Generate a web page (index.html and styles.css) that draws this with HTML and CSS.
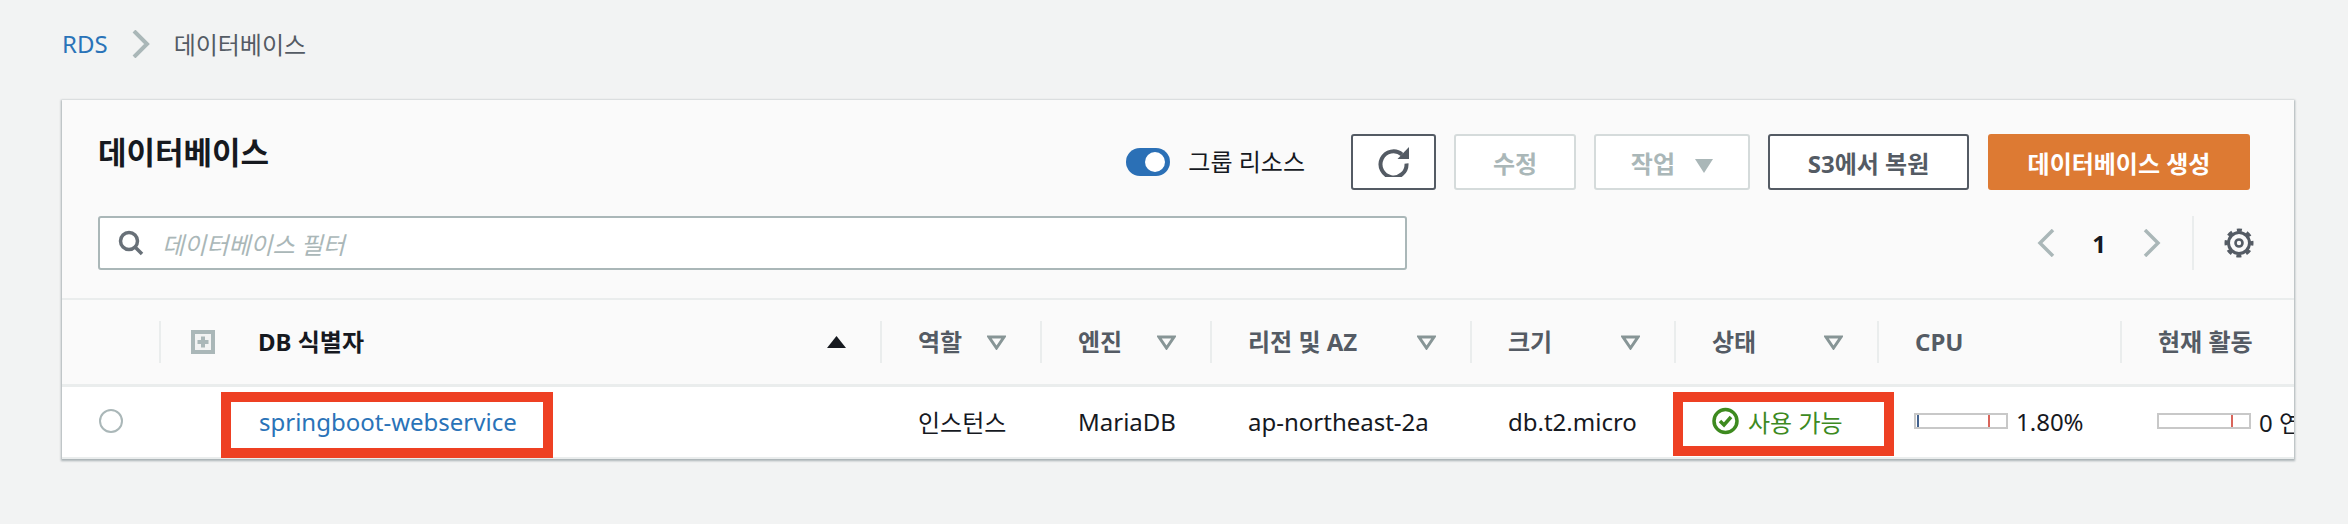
FILE: index.html
```html
<!DOCTYPE html>
<html lang="ko">
<head>
    <meta charset="UTF-8">
    <title>데이터베이스 - RDS</title>
    <link rel="stylesheet" href="styles.css">
</head>
<body>
    <nav class="breadcrumb">
        <a class="crumb-link" href="#">RDS</a>
        <svg class="crumb-sep" width="18" height="28" viewBox="0 0 18 28"><path d="M2 1l13 13L2 27" fill="none" stroke="#aab7b8" stroke-width="4"/></svg>
        <span class="crumb-current">데이터베이스</span>
    </nav>

    <section class="card">
        <header class="card-head">
            <div class="head-row">
                <h1 class="title">데이터베이스</h1>
                <div class="actions">
                    <span class="toggle"><span class="toggle-knob"></span></span>
                    <span class="toggle-label">그룹 리소스</span>
                    <button class="btn btn-refresh" type="button" aria-label="새로 고침">
                        <svg width="31" height="30" viewBox="0 0 31 30"><path d="M24 7.500A13 13 0 1 0 28.500 16.500" fill="none" stroke="#545b64" stroke-width="4"/><path d="M31 0v12H19.500z" fill="#545b64"/></svg>
                    </button>
                    <button class="btn btn-disabled btn-edit" type="button">수정</button>
                    <button class="btn btn-disabled btn-work" type="button">작업 <svg class="caret" width="18" height="14" viewBox="0 0 18 14"><path d="M0 0h18L9 14z" fill="#aab7b8"/></svg></button>
                    <button class="btn btn-restore" type="button">S3에서 복원</button>
                    <button class="btn btn-primary" type="button">데이터베이스 생성</button>
                </div>
            </div>
            <div class="head-row filter-row">
                <label class="search">
                    <svg width="26" height="26" viewBox="0 0 26 26"><circle cx="11" cy="11" r="8.500" fill="none" stroke="#687078" stroke-width="3.500"/><path d="M17 17l7 7" stroke="#687078" stroke-width="3.500"/></svg>
                    <span class="search-hint">데이터베이스 필터</span>
                </label>
                <div class="pager">
                    <svg width="18" height="28" viewBox="0 0 18 28"><path d="M16 1L3 14l13 13" fill="none" stroke="#aab7b8" stroke-width="3.500"/></svg>
                    <span class="page-num">1</span>
                    <svg width="18" height="28" viewBox="0 0 18 28"><path d="M2 1l13 13L2 27" fill="none" stroke="#aab7b8" stroke-width="3.500"/></svg>
                    <span class="pager-sep"></span>
                    <svg class="gear" width="30" height="30" viewBox="0 0 30 30"><circle cx="15" cy="15" r="10.500" fill="none" stroke="#545b64" stroke-width="3"/><circle cx="15" cy="15" r="13" fill="none" stroke="#545b64" stroke-width="3" stroke-dasharray="5.100 5.110" stroke-dashoffset="2.550"/><circle cx="15" cy="15" r="3.500" fill="none" stroke="#545b64" stroke-width="2.600"/></svg>
                </div>
            </div>
        </header>

        <div class="table">
            <div class="row row-head">
                <div class="th th-check"></div>
                <div class="th th-name">
                    <svg class="expand" width="24" height="24" viewBox="0 0 24 24"><path d="M0 0h24v24H0z" fill="#aab7b8"/><path d="M4 4h16v16H4z" fill="#f2f3f3"/><path d="M10 6.500h4V10h3.500v4H14v3.500h-4V14H6.500v-4H10z" fill="#aab7b8"/></svg>
                    <span class="th-name-text">DB 식별자</span>
                    <svg class="sort" width="19" height="12" viewBox="0 0 19 12"><path d="M9.500 0L19 12H0z" fill="#16191f"/></svg>
                </div>
                <div class="th">역할<svg class="filter" width="19" height="15" viewBox="0 0 19 15"><path d="M2 2h15L9.500 13z" fill="none" stroke="#879596" stroke-width="3"/></svg></div>
                <div class="th">엔진<svg class="filter" width="19" height="15" viewBox="0 0 19 15"><path d="M2 2h15L9.500 13z" fill="none" stroke="#879596" stroke-width="3"/></svg></div>
                <div class="th">리전 및 AZ<svg class="filter" width="19" height="15" viewBox="0 0 19 15"><path d="M2 2h15L9.500 13z" fill="none" stroke="#879596" stroke-width="3"/></svg></div>
                <div class="th">크기<svg class="filter" width="19" height="15" viewBox="0 0 19 15"><path d="M2 2h15L9.500 13z" fill="none" stroke="#879596" stroke-width="3"/></svg></div>
                <div class="th">상태<svg class="filter" width="19" height="15" viewBox="0 0 19 15"><path d="M2 2h15L9.500 13z" fill="none" stroke="#879596" stroke-width="3"/></svg></div>
                <div class="th">CPU</div>
                <div class="th th-last">현재 활동</div>
            </div>
            <div class="row row-body">
                <div class="td td-check"><span class="radio"></span></div>
                <div class="td td-name"><a class="db-link" href="#">springboot-webservice</a><span class="mark mark-name"></span></div>
                <div class="td">인스턴스</div>
                <div class="td">MariaDB</div>
                <div class="td">ap-northeast-2a</div>
                <div class="td">db.t2.micro</div>
                <div class="td td-status">
                    <svg width="27" height="28" viewBox="0 0 27 28"><circle cx="13.500" cy="14" r="11.500" fill="none" stroke="#3d8a1f" stroke-width="3.500"/><path d="M8 14l4 4 7-8" fill="none" stroke="#3d8a1f" stroke-width="3.500"/></svg>
                    <span>사용 가능</span>
                    <span class="mark mark-status"></span>
                </div>
                <div class="td td-meter">
                    <span class="meter"><span class="meter-used"></span><span class="meter-limit"></span></span>
                    <span>1.80%</span>
                </div>
                <div class="td td-meter">
                    <span class="meter"><span class="meter-limit"></span></span>
                    <span>0 연결</span>
                </div>
            </div>
        </div>
    </section>
</body>
</html>
```

FILE: styles.css
```css
body {
    margin: 0;
    height: 524px;
    overflow: hidden;
    background-color: #f2f3f3;
    color: #16191f;
    font-family: "Noto Sans", "Noto Sans CJK KR", sans-serif;
    font-size: 24px;
}

a {
    text-decoration: none;
}

/* Breadcrumb */
.breadcrumb {
    display: flex;
    align-items: center;
    height: 86px;
    padding-left: 62px;
}

.crumb-link {
    color: #2a73b8;
}

.crumb-sep {
    margin: 2px 24px 0 24px;
}

.crumb-current {
    color: #545b64;
}

/* Card */
.card {
    width: 2232px;
    margin: 14px 0 0 62px;
    background-color: #fafafa;
    box-shadow: 0 1px 2px 1px rgba(0, 28, 36, 0.3);
    overflow: hidden;
}

.card-head {
    padding: 34px 44px 28px 36px;
    border-bottom: 2px solid #eaeded;
}

.head-row {
    display: flex;
    justify-content: space-between;
    align-items: flex-start;
}

.title {
    margin: 0;
    font-size: 31px;
    line-height: 36px;
    font-weight: 700;
}

.actions {
    display: flex;
    align-items: center;
    gap: 18px;
}

.toggle {
    display: flex;
    justify-content: flex-end;
    align-items: center;
    width: 44px;
    height: 28px;
    padding: 0 5px;
    box-sizing: border-box;
    border-radius: 14px;
    background-color: #2b70b6;
}

.toggle-knob {
    width: 20px;
    height: 20px;
    border-radius: 50%;
    background-color: #fff;
}

.toggle-label {
    margin-right: 28px;
    line-height: 28px;
}

.btn {
    height: 56px;
    box-sizing: border-box;
    padding: 0;
    border: 2px solid #545b64;
    border-radius: 3px;
    background-color: #fff;
    color: #545b64;
    font-family: inherit;
    font-size: 24px;
    font-weight: 700;
}

.btn-refresh {
    display: flex;
    justify-content: center;
    align-items: center;
    width: 85px;
}

.btn-disabled {
    border-color: #d5dbdb;
    color: #aab7b8;
}

.btn-edit {
    width: 122px;
}

.btn-work {
    width: 156px;
}

.caret {
    margin-left: 14px;
}

.btn-restore {
    width: 201px;
    margin-right: 1px;
}

.btn-primary {
    width: 262px;
    border-color: #dd7a33;
    background-color: #dd7a33;
    color: #fff;
}

.filter-row {
    margin-top: 26px;
    align-items: center;
}

.search {
    display: flex;
    align-items: center;
    gap: 18px;
    width: 1309px;
    height: 54px;
    box-sizing: border-box;
    padding-left: 18px;
    border: 2px solid #aab7b8;
    border-radius: 3px;
    background-color: #fff;
}

.search-hint {
    color: #aab7b8;
    font-style: italic;
}

.pager {
    display: flex;
    align-items: center;
    margin-right: -4px;
}

.page-num {
    width: 88px;
    text-align: center;
    font-weight: 700;
}

.pager-sep {
    width: 2px;
    height: 54px;
    margin: 0 30px 0 31px;
    background-color: #eaeded;
}

/* Table */
.row {
    display: grid;
    grid-template-columns: 99px 721px 160px 170px 260px 204px 203px 243px 172px;
    align-items: center;
}

.row-head {
    height: 84px;
    border-bottom: 3px solid #eaeded;
    color: #545b64;
    font-weight: 700;
}

.row-body {
    position: relative;
    height: 70px;
    background-color: #fff;
    border-bottom: 2px solid #eaeded;
}

.th {
    display: flex;
    justify-content: space-between;
    align-items: center;
    height: 42px;
    box-sizing: border-box;
    padding: 0 34px 0 36px;
    border-right: 2px solid #eaeded;
    line-height: 36px;
}

.th-check {
    padding: 0;
}

.th-name {
    justify-content: flex-start;
    padding: 0 34px 0 30px;
    color: #16191f;
}

.th-name-text {
    margin-left: 43px;
}

.sort {
    margin-left: auto;
}

.th-last {
    border-right: none;
    white-space: nowrap;
}

.filter {
    flex: none;
}

.td {
    padding-left: 36px;
    padding-bottom: 2px;
    white-space: nowrap;
}

.td-check {
    padding-left: 37px;
    display: flex;
}

.radio {
    width: 24px;
    height: 24px;
    box-sizing: border-box;
    border: 2px solid #aab7b8;
    border-radius: 50%;
}

.td-name {
    padding-left: 98px;
}

.db-link {
    color: #2a73b8;
}

.td-status {
    display: flex;
    align-items: center;
    gap: 9px;
    color: #3d8a1f;
}

.td-meter {
    display: flex;
    align-items: center;
    gap: 8px;
    padding-left: 35px;
}

.meter {
    position: relative;
    flex: none;
    width: 94px;
    height: 16px;
    box-sizing: border-box;
    border: 2px solid #c8c8c8;
}

.meter-used {
    position: absolute;
    left: 1px;
    top: 0;
    width: 2px;
    height: 12px;
    background-color: #44638f;
}

.meter-limit {
    position: absolute;
    left: 72px;
    top: 0;
    width: 2px;
    height: 12px;
    background-color: #d9655b;
}

/* Red annotation boxes drawn over the row */
.mark {
    position: absolute;
    box-sizing: border-box;
    border: 10px solid #ee4023;
}

.mark-name {
    left: 159px;
    top: 5px;
    width: 332px;
    height: 66px;
}

.mark-status {
    left: 1611px;
    top: 5px;
    width: 221px;
    height: 64px;
}
```
